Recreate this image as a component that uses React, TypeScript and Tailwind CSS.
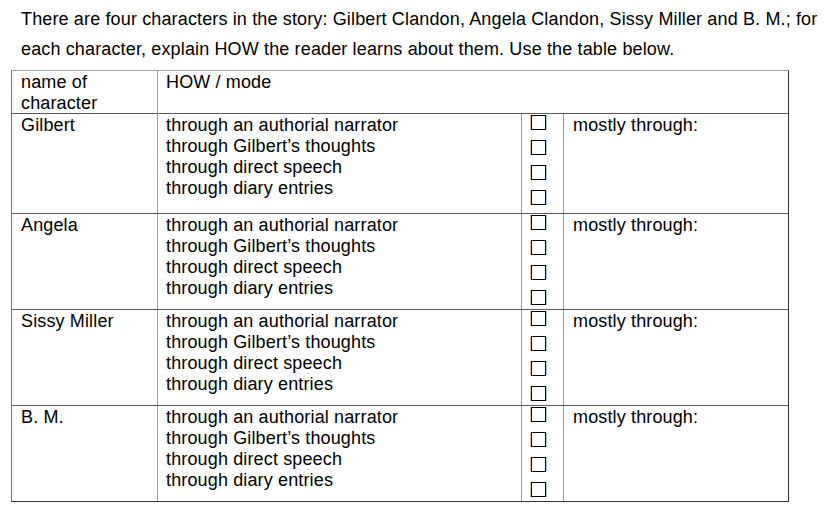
const modes = [
  'through an authorial narrator',
  'through Gilbert\u2019s thoughts',
  'through direct speech',
  'through diary entries',
];

const characters = [
  { name: 'Gilbert', height: 'h-[100px]' },
  { name: 'Angela', height: 'h-[96px]' },
  { name: 'Sissy Miller', height: 'h-[96px]' },
  { name: 'B. M.', height: 'h-[95px]' },
];

function Box() {
  // tiny colour fringes imitate the cleartype edge of the box glyph
  return (
    <span className="block w-[15px] h-[15px] border border-black shadow-[-1px_0_0_rgba(200,120,40,0.45),1px_0_0_rgba(60,140,230,0.45)]" />
  );
}

function CharacterRow({ name, height, last }: { name: string; height: string; last: boolean }) {
  return (
    <div
      className={`grid grid-cols-[146px_364px_42px_224px] ${height} ${
        last ? '' : 'border-b border-[#5a5a5a]'
      }`}
    >
      <div className="border-r border-[#999] pl-[9px] pt-[1px]">{name}</div>
      <div className="border-r border-[#999] pl-[8px] pt-[1px]">
        {modes.map((m) => (
          <div key={m}>{m}</div>
        ))}
      </div>
      <div className="border-r border-[#999] pl-[9px] pt-[1px] flex flex-col gap-[10px]">
        {modes.map((m) => (
          <Box key={m} />
        ))}
      </div>
      <div className="pl-[9px] pt-[1px]">mostly through:</div>
    </div>
  );
}

export default function App() {
  return (
    <div
      className="w-[826px] h-[521px] bg-white text-black text-[18px] leading-[21px] tracking-[0.14px]"
      style={{ fontFamily: '"Liberation Sans", Arial, sans-serif' }}
    >
      <p className="pl-[21px] pt-[4px] leading-[30px] whitespace-nowrap">
        There are four characters in the story: Gilbert Clandon, Angela Clandon, Sissy Miller and B. M.; for
        <br />
        each character, explain HOW the reader learns about them. Use the table below.
      </p>

      <div className="ml-[11px] mt-[6px] w-[778px] border-t border-t-[#a0a0a0] border-l border-l-[#707070] border-r border-r-[#333] border-b border-b-[#333]">
        <div className="grid grid-cols-[146px_1fr] h-[43px] border-b border-[#5a5a5a]">
          <div className="border-r border-[#999] pl-[9px] pt-[1px]">
            name of
            <br />
            character
          </div>
          <div className="pl-[8px] pt-[1px]">HOW / mode</div>
        </div>
        {characters.map((c, i) => (
          <CharacterRow key={c.name} name={c.name} height={c.height} last={i === characters.length - 1} />
        ))}
      </div>
    </div>
  );
}
